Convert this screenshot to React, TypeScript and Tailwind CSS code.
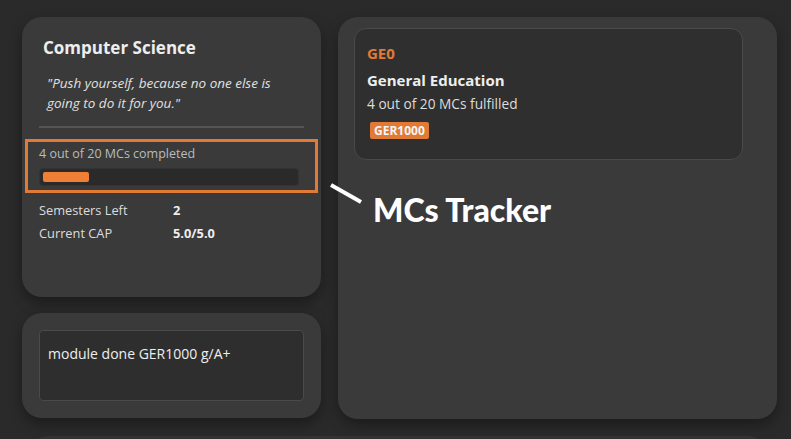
const App = () => {
  return (
    <div className="relative w-[791px] h-[439px] overflow-hidden bg-[#2a2a2a] font-['Open_Sans',sans-serif]">
      <div className="flex pt-[17px] pl-[22px]">
        <div className="flex flex-col gap-4 w-[299px]">
          <div className="h-[280px] rounded-[20px] bg-[#3a3a3a] shadow-[0_6px_14px_rgba(0,0,0,0.35)] px-[17px] pt-[19px]">
            <h1 className="pl-1 text-[17px] font-bold text-[#eeeeee] leading-6">Computer Science</h1>
            <p className="mt-[13px] pl-2 pr-4 text-[13.5px] italic leading-5 text-[#e0e0e0]">
              "Push yourself, because no one else is going to do it for you."
            </p>
            <div className="mt-[13px] h-[2px] bg-[#555555]" />
            <div className="-mx-[14px] mt-[11px] border-[3px] border-[#e07a35] px-[11px] pt-[4px] pb-[4px]">
              <div className="text-[12.5px] leading-4 text-[#bbbbbb]">4 out of 20 MCs completed</div>
              <div className="mt-[6px] h-[18px] w-[260px] rounded-[4px] bg-[#2a2a2a] border border-[#333333] p-[3px]">
                <div className="h-[10px] w-[46px] rounded-[2px] bg-[#ef7e36]" />
              </div>
            </div>
            <div className="mt-[7px] grid grid-cols-[134px_1fr] gap-y-[3px] text-[12.8px] leading-5 text-[#dddddd]">
              <span>Semesters Left</span>
              <span className="font-bold text-[#eeeeee]">2</span>
              <span>Current CAP</span>
              <span className="font-bold text-[#eeeeee]">5.0/5.0</span>
            </div>
          </div>
          <div className="h-[105px] rounded-[20px] bg-[#3a3a3a] shadow-[0_6px_14px_rgba(0,0,0,0.35)] p-[17px]">
            <div className="h-[71px] rounded-[4px] border border-[#4a4a4a] bg-[#2e2e2e] px-[8px] pt-[12px] text-[14px] text-[#eeeeee]">
              module done GER1000 g/A+
            </div>
          </div>
        </div>
        <div className="ml-[17px] w-[439px] h-[402px] rounded-[20px] bg-[#3a3a3a] shadow-[0_6px_14px_rgba(0,0,0,0.35)] pt-[11px] pl-[16px]">
          <div className="w-[389px] h-[132px] rounded-[12px] border border-[#4a4a4a] bg-[#2f2f2f] px-[12px] pt-[14px]">
            <div className="text-[15px] font-bold leading-5 text-[#e07a35]">GE0</div>
            <div className="mt-[7px] text-[15px] font-bold leading-5 text-[#eeeeee]">General Education</div>
            <div className="mt-[4px] text-[13.7px] leading-5 text-[#dddddd]">4 out of 20 MCs fulfilled</div>
            <span className="mt-[8px] ml-[3px] inline-block rounded-[2px] bg-[#e07a35] px-[4px] text-[12px] font-bold leading-[17px] text-[#f5f5f5]">GER1000</span>
          </div>
        </div>
      </div>
      <div className="mt-[17px] ml-[28px] h-[40px] w-[740px] rounded-t-[20px] bg-[#333333]" />
      <svg className="absolute left-[328px] top-[182px]" width="36" height="24">
        <line x1="3" y1="3" x2="33" y2="20" stroke="#ffffff" strokeWidth="4" />
      </svg>
      <div className="absolute left-[373px] top-[192px] font-['Lato',sans-serif] text-[32px] font-black leading-9 text-white">
        MCs Tracker
      </div>
    </div>
  )
}

export default App
